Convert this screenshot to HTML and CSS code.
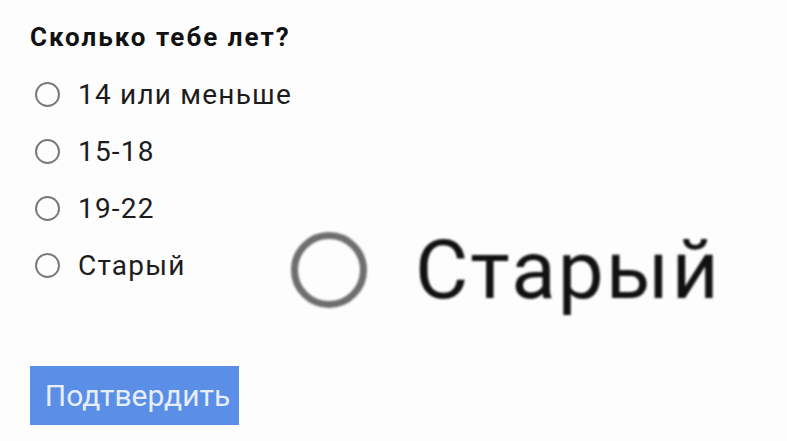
FILE: index.html
```html
<!DOCTYPE html>
<html lang="ru">
<head>
    <meta charset="UTF-8">
    <meta name="viewport" content="width=device-width, initial-scale=1.0">
    <title>Опрос</title>
    <link rel="stylesheet" href="styles.css">
</head>
<body>
    <div class="poll">
        <div class="question">Сколько тебе лет?</div>
        <div class="options">
            <label class="option"><span class="radio"></span><span class="label">14 или меньше</span></label>
            <label class="option"><span class="radio"></span><span class="label">15-18</span></label>
            <label class="option"><span class="radio"></span><span class="label">19-22</span></label>
            <label class="option"><span class="radio"></span><span class="label">Старый</span></label>
        </div>
        <button class="submit">Подтвердить</button>
    </div>
    <!-- zoomed-in copy of the last answer -->
    <div class="zoom">
        <span class="radio big"></span>
        <span class="label big">Старый</span>
    </div>
</body>
</html>
```

FILE: styles.css
```css
* {
    box-sizing: border-box;
}
body {
    margin: 0;
    background: #fdfdfd;
    font-family: Roboto, "Noto Sans", sans-serif;
    color: #161616;
    position: relative;
    height: 441px;
    overflow: hidden;
}
.poll {
    display: flex;
    flex-direction: column;
    align-items: flex-start;
    padding: 21px 0 0 30px;
}
.question {
    font-weight: bold;
    font-size: 26px;
    letter-spacing: 2px;
    line-height: 32px;
    color: #111;
}
.options {
    display: flex;
    flex-direction: column;
    gap: 25px;
    margin-top: 25px;
}
.option {
    display: flex;
    align-items: center;
    height: 32px;
}
.radio {
    width: 25px;
    height: 25px;
    border: 2.5px solid #7a7a7a;
    border-radius: 50%;
    margin-left: 5px;
}
.label {
    font-size: 28px;
    letter-spacing: 1.2px;
    margin-left: 18px;
    color: #1c1c1c;
}
.submit {
    margin-top: 85px;
    width: 209px;
    height: 59px;
    border: none;
    background: #5b8ee6;
    color: #e6eefa;
    font-family: Roboto, "Noto Sans", sans-serif;
    font-size: 30px;
    padding: 0 0 0 6px;
}
.zoom {
    position: absolute;
    left: 291px;
    top: 222px;
    display: flex;
    align-items: center;
    filter: blur(0.8px);
}
.radio.big {
    width: 76px;
    height: 76px;
    border: 7px solid #6e6e6e;
    margin-left: 0;
}
.label.big {
    font-size: 82px;
    letter-spacing: 2px;
    margin-left: 48px;
    color: #111;
}
```
